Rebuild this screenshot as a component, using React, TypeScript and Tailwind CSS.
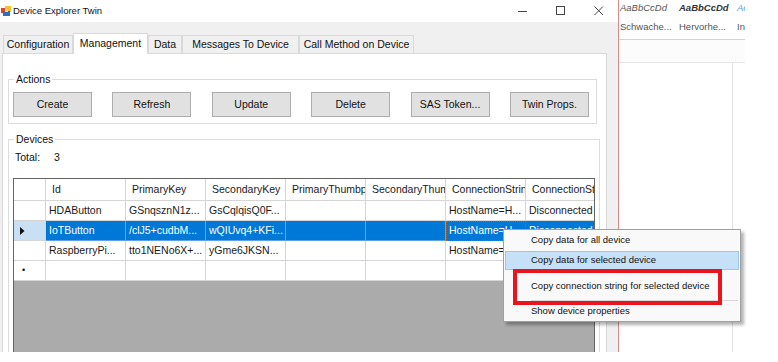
import React from 'react';

const tabs = [
  { label: 'Configuration', w: 'w-[70px]' },
  { label: 'Management', w: 'w-[75px]', active: true },
  { label: 'Data', w: 'w-[34px]' },
  { label: 'Messages To Device', w: 'w-[117px]' },
  { label: 'Call Method on Device', w: 'w-[115px]' },
];

const actions = ['Create', 'Refresh', 'Update', 'Delete', 'SAS Token...', 'Twin Props.'];

const columns = [
  'Id',
  'PrimaryKey',
  'SecondaryKey',
  'PrimaryThumbprint',
  'SecondaryThumbprint',
  'ConnectionString',
  'ConnectionState',
];

const devices = [
  ['HDAButton', 'GSnqsznN1z...', 'GsCqlqisQ0F...', '', '', 'HostName=H...', 'Disconnected'],
  ['IoTButton', '/clJ5+cudbM...', 'wQIUvq4+KFi...', '', '', 'HostName=H...', 'Disconnected'],
  ['RaspberryPi...', 'tto1NENo6X+...', 'yGme6JKSN...', '', '', 'HostName=H...', 'Disconnected'],
];

const selectedRow = 1;
const focusedCol = 5;

function TitleBar() {
  return (
    <div className="flex h-[22px] shrink-0 items-center bg-white">
      <svg width="11" height="12" viewBox="0 0 11 12" className="ml-[1px]">
        <rect x="0" y="3" width="5" height="5" fill="#e0452c" />
        <rect x="4" y="1" width="6" height="6" fill="#f5c12e" />
        <rect x="2" y="6" width="7" height="5" fill="#2f6fc9" />
        <rect x="4" y="4" width="3" height="3" fill="#f7e07a" />
      </svg>
      <span className="ml-[1px] flex-1 text-[9.5px] text-[#111]">Device Explorer Twin</span>
      <div className="flex h-full w-[38px] items-center justify-center">
        <svg width="10" height="10" viewBox="0 0 10 10">
          <line x1="0" y1="5.5" x2="9" y2="5.5" stroke="#444" strokeWidth="1" />
        </svg>
      </div>
      <div className="flex h-full w-[38px] items-center justify-center">
        <svg width="10" height="10" viewBox="0 0 10 10">
          <rect x="0.5" y="0.5" width="8" height="8" fill="none" stroke="#444" strokeWidth="1" />
        </svg>
      </div>
      <div className="flex h-full w-[38px] items-center justify-center">
        <svg width="10" height="10" viewBox="0 0 10 10">
          <path d="M0.5 0.5 L9 9 M9 0.5 L0.5 9" stroke="#444" strokeWidth="1" />
        </svg>
      </div>
    </div>
  );
}

function Grid() {
  return (
    <div className="ml-[4px] mt-[13px] h-[200px] w-[582px] overflow-hidden border border-[#646464] bg-[#ababab] text-[10.5px]">
      {/* header */}
      <div className="flex h-[22px] bg-white">
        <div className="w-[32px] shrink-0 border-b border-r border-[#d5d5d5]" />
        {columns.map((c) => (
          <div
            key={c}
            className="flex w-[80px] shrink-0 items-center overflow-hidden whitespace-nowrap border-b border-r border-[#d5d5d5] pl-[6px] text-[#1a1a1a]"
          >
            {c}
          </div>
        ))}
      </div>

      {devices.map((row, r) => {
        const sel = r === selectedRow;
        return (
          <div key={r} className="flex h-[20px]">
            <div
              className={
                sel
                  ? 'flex w-[32px] shrink-0 items-center border-b border-r border-[#d5d5d5] bg-[#c9dff3] pl-[6px]'
                  : 'w-[32px] shrink-0 border-b border-r border-[#d5d5d5] bg-white'
              }
            >
              {sel && (
                <svg width="5" height="8" viewBox="0 0 5 8">
                  <polygon points="0,0 4.5,4 0,8" fill="#111" />
                </svg>
              )}
            </div>
            {row.map((cell, c) => (
              <div
                key={c}
                className={
                  sel
                    ? c === focusedCol
                      ? 'flex w-[80px] shrink-0 items-center overflow-hidden whitespace-nowrap border border-dotted border-[#a8642a] bg-[#0078d7] pl-[2px] text-white'
                      : 'flex w-[80px] shrink-0 items-center overflow-hidden whitespace-nowrap border-b border-r border-[#5fa3e0] bg-[#0078d7] pl-[3px] text-white'
                    : 'flex w-[80px] shrink-0 items-center overflow-hidden whitespace-nowrap border-b border-r border-[#d5d5d5] bg-white pl-[3px] text-[#1a1a1a]'
                }
              >
                {cell}
              </div>
            ))}
          </div>
        );
      })}

      {/* new row */}
      <div className="flex h-[20px]">
        <div className="flex w-[32px] shrink-0 items-center border-b border-r border-[#d5d5d5] bg-white pl-[8px] text-[9px] leading-none text-[#111]">
          •
        </div>
        {columns.map((c) => (
          <div key={c} className="w-[80px] shrink-0 border-b border-r border-[#d5d5d5] bg-white" />
        ))}
      </div>
    </div>
  );
}

function DeviceExplorer() {
  return (
    <div className="flex h-[352px] w-[618px] shrink-0 flex-col overflow-hidden bg-[#f0f0f0]">
      <TitleBar />

      <div className="relative z-10 flex h-[31px] shrink-0 items-end pl-[3px] pt-[11px] text-[10.5px] text-[#111]">
        {tabs.map((t) =>
          t.active ? (
            <div
              key={t.label}
              className={`${t.w} -mb-px flex h-[21px] items-center justify-center border-l border-r border-t border-[#d9d9d9] bg-white`}
            >
              {t.label}
            </div>
          ) : (
            <div
              key={t.label}
              className={`${t.w} flex h-[18px] items-center justify-center border-l border-r border-t border-[#d9d9d9] bg-[#f0f0f0]`}
            >
              {t.label}
            </div>
          )
        )}
      </div>

      <div className="ml-[2px] w-[605px] flex-1 border border-[#d9d9d9] bg-white text-[10.5px] text-[#111]">
        <fieldset className="ml-[5px] mt-[19px] w-[589px] border border-[#dcdcdc]">
          <legend className="ml-[5px] px-[2px] leading-[13px]">Actions</legend>
          <div className="flex justify-between pb-[6px] pl-[4px] pr-[7px] pt-[6px]">
            {actions.map((a) => (
              <button
                key={a}
                className="h-[25px] w-[79px] border border-[#adadad] bg-[#e1e1e1] text-[10.5px] text-[#111]"
              >
                {a}
              </button>
            ))}
          </div>
        </fieldset>

        <fieldset className="ml-[5px] mt-[9px] h-[260px] w-[592px] border border-[#dcdcdc]">
          <legend className="ml-[5px] px-[2px] leading-[13px]">Devices</legend>
          <div className="mt-[5px] flex h-[14px] items-center pl-[6px]">
            <span className="w-[39px]">Total:</span>
            <span>3</span>
          </div>
          <Grid />
        </fieldset>
      </div>
    </div>
  );
}

function WordPane() {
  return (
    <div className="flex h-[352px] w-[126px] shrink-0 flex-col overflow-hidden bg-white text-[9.5px]">
      <div className="h-[40px] shrink-0 border-b border-[#d4d4d4] pl-[1px] pt-[2px] whitespace-nowrap">
        <div className="flex h-[13px] items-center italic">
          <span className="w-[59px] shrink-0 text-[#555]">AaBbCcDd</span>
          <span className="w-[58px] shrink-0 font-bold text-[#333]">AaBbCcDd</span>
          <span className="text-[#5b9bd5]">Ac</span>
        </div>
        <div className="mt-[6px] flex h-[13px] items-center text-[#555]">
          <span className="w-[59px] shrink-0">Schwache...</span>
          <span className="w-[58px] shrink-0">Hervorhe...</span>
          <span>In</span>
        </div>
      </div>
      <div className="h-[23px] shrink-0 border-b border-[#e6e6e6] bg-[#fcfcfc]" />
      <div className="flex flex-1">
        <div className="w-[113px] shrink-0" />
        <div className="flex-1 border-l border-[#e2e2e2]" />
      </div>
    </div>
  );
}

function ContextMenu() {
  return (
    <>
      <div className="absolute left-[503px] top-[229px] flex w-[238px] flex-col border border-[#a0a0a0] bg-[#f9f9f9] text-[9.5px] text-[#111] shadow-[3px_3px_3px_rgba(0,0,0,0.3)]">
        <div className="flex h-[21px] items-center pl-[27px]">Copy data for all device</div>
        <div className="mx-px flex h-[19px] items-center border border-[#99c7ee] bg-[#c6e0f7] pl-[25px]">
          Copy data for selected device
        </div>
        <div className="flex h-[30px] items-center pl-[27px] pt-[2px]">Copy connection string for selected device</div>
        <div className="ml-[27px] mr-[2px] h-px bg-[#d7d7d7]" />
        <div className="flex h-[20px] items-center pl-[27px]">Show device properties</div>
      </div>
      <div className="pointer-events-none absolute left-[513px] top-[269px] h-[36px] w-[209px] border-[4px] border-[#e8141e]" />
    </>
  );
}

export default function App() {
  return (
    <div className="relative flex h-[362px] w-[778px] overflow-hidden bg-white font-['Liberation_Sans',Arial,sans-serif]">
      <DeviceExplorer />
      <div className="h-[352px] w-px shrink-0 bg-[#d98a8a]" />
      <WordPane />
      <ContextMenu />
    </div>
  );
}
